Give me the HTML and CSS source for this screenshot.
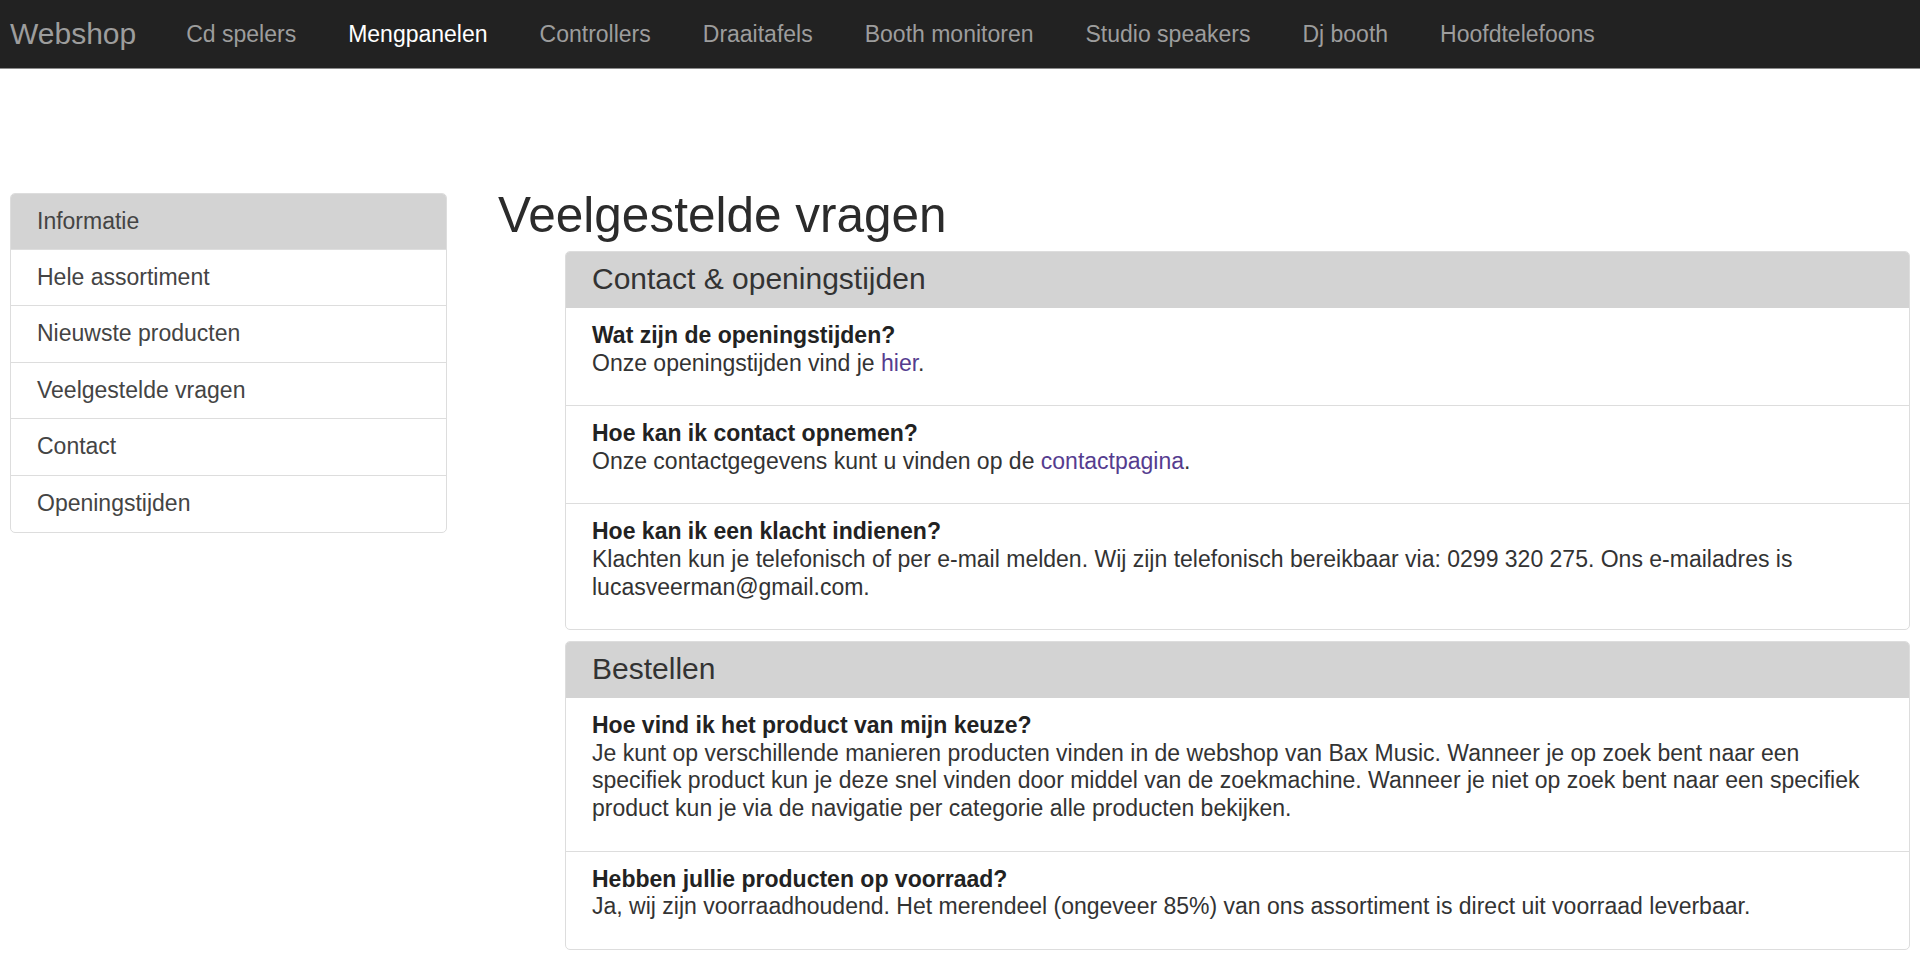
FILE: index.html
```html
<!DOCTYPE html>
<html lang="nl">
<head>
<meta charset="utf-8">
<title>Webshop - Veelgestelde vragen</title>
<link rel="stylesheet" href="styles.css">
</head>
<body>
<nav class="navbar">
  <a class="brand" href="#">Webshop</a>
  <ul class="nav-links">
    <li><a href="#">Cd spelers</a></li>
    <li><a class="active" href="#">Mengpanelen</a></li>
    <li><a href="#">Controllers</a></li>
    <li><a href="#">Draaitafels</a></li>
    <li><a href="#">Booth monitoren</a></li>
    <li><a href="#">Studio speakers</a></li>
    <li><a href="#">Dj booth</a></li>
    <li><a href="#">Hoofdtelefoons</a></li>
  </ul>
</nav>

<div class="layout">
  <aside class="sidebar">
    <div class="list-header">Informatie</div>
    <a class="list-item" href="#">Hele assortiment</a>
    <a class="list-item" href="#">Nieuwste producten</a>
    <a class="list-item" href="#">Veelgestelde vragen</a>
    <a class="list-item" href="#">Contact</a>
    <a class="list-item" href="#">Openingstijden</a>
  </aside>

  <main class="content">
    <h1 class="page-title">Veelgestelde vragen</h1>
    <div class="panels">
      <section class="panel">
        <h2 class="panel-heading">Contact &amp; openingstijden</h2>
        <div class="faq">
          <p class="question">Wat zijn de openingstijden?</p>
          <p class="answer">Onze openingstijden vind je <a class="link" href="#">hier</a>.</p>
        </div>
        <div class="faq">
          <p class="question">Hoe kan ik contact opnemen?</p>
          <p class="answer">Onze contactgegevens kunt u vinden op de <a class="link" href="#">contactpagina</a>.</p>
        </div>
        <div class="faq">
          <p class="question">Hoe kan ik een klacht indienen?</p>
          <p class="answer">Klachten kun je telefonisch of per e-mail melden. Wij zijn telefonisch bereikbaar via: 0299 320 275. Ons e-mailadres is lucasveerman@gmail.com.</p>
        </div>
      </section>

      <section class="panel">
        <h2 class="panel-heading">Bestellen</h2>
        <div class="faq">
          <p class="question">Hoe vind ik het product van mijn keuze?</p>
          <p class="answer">Je kunt op verschillende manieren producten vinden in de webshop van Bax Music. Wanneer je op zoek bent naar een specifiek product kun je deze snel vinden door middel van de zoekmachine. Wanneer je niet op zoek bent naar een specifiek product kun je via de navigatie per categorie alle producten bekijken.</p>
        </div>
        <div class="faq">
          <p class="question">Hebben jullie producten op voorraad?</p>
          <p class="answer">Ja, wij zijn voorraadhoudend. Het merendeel (ongeveer 85%) van ons assortiment is direct uit voorraad leverbaar.</p>
        </div>
      </section>
    </div>
  </main>
</div>
</body>
</html>
```

FILE: styles.css
```css
* {
  box-sizing: border-box;
}

html, body {
  margin: 0;
  padding: 0;
  background: #fff;
}

body {
  font-family: "Liberation Sans", Arial, Helvetica, sans-serif;
  font-size: 23px;
  line-height: 27.6px;
  color: #333;
}

a {
  text-decoration: none;
}

/* Navbar */
.navbar {
  display: flex;
  align-items: center;
  height: 69px;
  background: #222;
  border-bottom: 1px solid #8c8c8c;
}

.brand {
  padding: 0 24px 0 10px;
  font-size: 30px;
  line-height: 68px;
  color: #9d9d9d;
}

.nav-links {
  display: flex;
  margin: 0;
  padding: 0;
  list-style: none;
}

.nav-links a {
  display: block;
  padding: 0 26px;
  line-height: 68px;
  color: #9d9d9d;
}

.nav-links a.active {
  color: #fff;
}

/* Layout */
.layout {
  display: flex;
  align-items: flex-start;
  gap: 53px;
  padding: 119px 10px 30px 10px;
}

.sidebar {
  flex: 0 0 437px;
  margin-top: 5px;
  border: 1px solid #ddd;
  border-radius: 5px;
  overflow: hidden;
  display: flex;
  flex-direction: column;
}

.list-header,
.list-item {
  display: block;
  padding: 14px 26px;
  line-height: 27.6px;
  color: #444;
}

.list-header {
  background: #d3d3d3;
  border-bottom: 1px solid #ddd;
  padding-bottom: 13px;
}

.list-item {
  border-bottom: 1px solid #ddd;
}

.list-item:last-child {
  border-bottom: none;
}

.content {
  flex: 1;
  min-width: 0;
}

.page-title {
  margin: 0 0 10px -2px;
  font-size: 49.5px;
  line-height: 53px;
  font-weight: normal;
  color: #2b2b2b;
}

.panels {
  margin-left: 65px;
}

.panel {
  border: 1px solid #ddd;
  border-radius: 5px;
  overflow: hidden;
  margin-bottom: 11px;
}

.panel-heading {
  margin: 0;
  padding: 0 26px;
  height: 56px;
  line-height: 54px;
  font-size: 30px;
  font-weight: normal;
  background: #d3d3d3;
  color: #333;
}

.faq {
  padding: 14px 26px 28px 26px;
  border-top: 1px solid #ddd;
}

.panel-heading + .faq {
  border-top: none;
}

.faq p {
  margin: 0;
}

.question {
  font-weight: bold;
  color: #222;
}

.link {
  color: #553c8f;
}
```
